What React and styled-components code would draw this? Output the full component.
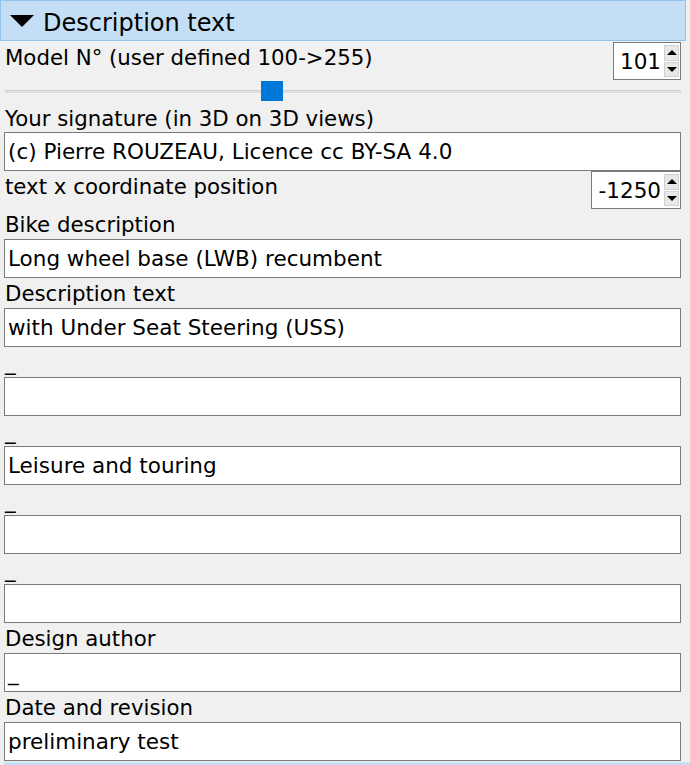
import React from "react";
import styled, { createGlobalStyle } from "styled-components";

const GlobalStyle = createGlobalStyle`
  html, body {
    margin: 0;
    padding: 0;
    background: #f0f0f0;
  }
  body {
    font-family: "DejaVu Sans", "Noto Sans", sans-serif;
    color: #000;
    overflow: hidden;
  }
`;

const Panel = styled.div`
  display: flex;
  flex-direction: column;
  width: 690px;
  height: 765px;
  overflow: hidden;
  background: #f0f0f0;
`;

const Header = styled.div`
  display: flex;
  align-items: center;
  box-sizing: border-box;
  width: 686px;
  height: 41px;
  flex-shrink: 0;
  padding-left: 9px;
  gap: 9px;
  background: #c4dff5;
  border: 1px solid #92c4ec;
  font-size: 24px;
`;

const HeaderText = styled.span`
  padding-top: 4px;
`;

const Triangle = styled.span`
  display: block;
  width: 0;
  height: 0;
  border-left: 12px solid transparent;
  border-right: 12px solid transparent;
  border-top: 12px solid #000;
  margin-top: 1px;
`;

const Body = styled.div`
  display: flex;
  flex-direction: column;
  padding: 0 9px 0 4px;
`;

const Row = styled.div`
  display: flex;
  align-items: flex-start;
  justify-content: space-between;
  height: ${(p) => p.h}px;
  flex-shrink: 0;
`;

const Label = styled.div`
  font-size: 21.3px;
  line-height: 25px;
  height: ${(p) => p.h || 30}px;
  padding-left: 1px;
  padding-top: ${(p) => p.top || 0}px;
  box-sizing: border-box;
  white-space: nowrap;
  flex-shrink: 0;
`;

const Input = styled.div`
  box-sizing: border-box;
  height: 39px;
  width: 677px;
  flex-shrink: 0;
  display: flex;
  align-items: center;
  padding-left: 3px;
  background: #fff;
  border: 1px solid #7a7a7a;
  font-size: 21.5px;
  white-space: nowrap;
`;

const Spin = styled.div`
  box-sizing: border-box;
  display: flex;
  align-items: stretch;
  width: ${(p) => p.w}px;
  height: ${(p) => p.hh || 38}px;
  margin-top: ${(p) => p.mt || 0}px;
  background: #fff;
  border: 1px solid #7a7a7a;
`;

const SpinValue = styled.div`
  flex: 1;
  display: flex;
  align-items: center;
  justify-content: flex-end;
  padding-right: 3px;
  font-size: 21.5px;
`;

const SpinButtons = styled.div`
  display: flex;
  flex-direction: column;
  width: 15px;
  padding: 2px 1px 2px 0;
  gap: 1px;
`;

const SpinButton = styled.div`
  flex: 1;
  display: flex;
  align-items: center;
  justify-content: center;
  background: #e8e8e8;
  border: 1px solid #d0d0d0;
`;

const Arrow = styled.span`
  width: 0;
  height: 0;
  border-left: 5px solid transparent;
  border-right: 5px solid transparent;
  ${(p) =>
    p.up ? "border-bottom: 5px solid #000;" : "border-top: 5px solid #000;"}
`;

const SliderRow = styled.div`
  position: relative;
  display: flex;
  align-items: center;
  height: 21px;
  width: 677px;
  padding-left: 1px;
  box-sizing: border-box;
  flex-shrink: 0;
`;

const Track = styled.div`
  flex: 1;
  height: 3px;
  margin-top: -1px;
  background: #dedede;
  border-top: 1px solid #d0d0d0;
  box-sizing: border-box;
`;

const Handle = styled.div`
  position: absolute;
  left: 257px;
  top: 0;
  width: 22px;
  height: 20px;
  background: #0078d7;
`;

const NextHeader = styled.div`
  height: 6px;
  margin-top: 1px;
  width: 686px;
  background: #c4dff5;
  border-top: 1px solid #cfe3f3;
  flex-shrink: 0;
`;

function SpinBox({ value, w, hh, mt }) {
  return (
    <Spin w={w} hh={hh} mt={mt}>
      <SpinValue>{value}</SpinValue>
      <SpinButtons>
        <SpinButton>
          <Arrow up />
        </SpinButton>
        <SpinButton>
          <Arrow />
        </SpinButton>
      </SpinButtons>
    </Spin>
  );
}

const fields = [
  { label: "Bike description", value: "Long wheel base (LWB) recumbent" },
  { label: "Description text", value: "with Under Seat Steering (USS)" },
  { label: "_", value: "" },
  { label: "_", value: "Leisure and touring" },
  { label: "_", value: "" },
  { label: "_", value: "" },
  { label: "Design author", value: "_" },
  { label: "Date and revision", value: "preliminary test" },
];

export default function App() {
  return (
    <Panel>
      <GlobalStyle />
      <Header>
        <Triangle />
        <HeaderText>Description text</HeaderText>
      </Header>
      <Body>
        <Row h={40}>
          <Label h={40} top={4}>
            Model N° (user defined 100-&gt;255)
          </Label>
          <SpinBox value="101" w={68} mt={1} />
        </Row>
        <SliderRow>
          <Track />
          <Handle />
        </SliderRow>
        <Label h={30} top={4}>Your signature (in 3D on 3D views)</Label>
        <Input>(c) Pierre ROUZEAU, Licence cc BY-SA 4.0</Input>
        <Row h={38}>
          <Label h={38} top={3}>text x coordinate position</Label>
          <SpinBox value="-1250" w={90} />
        </Row>
        {fields.map((f, i) => (
          <React.Fragment key={i}>
            <Label h={30} top={3}>{f.label}</Label>
            <Input>{f.value}</Input>
          </React.Fragment>
        ))}
        <NextHeader />
      </Body>
    </Panel>
  );
}
